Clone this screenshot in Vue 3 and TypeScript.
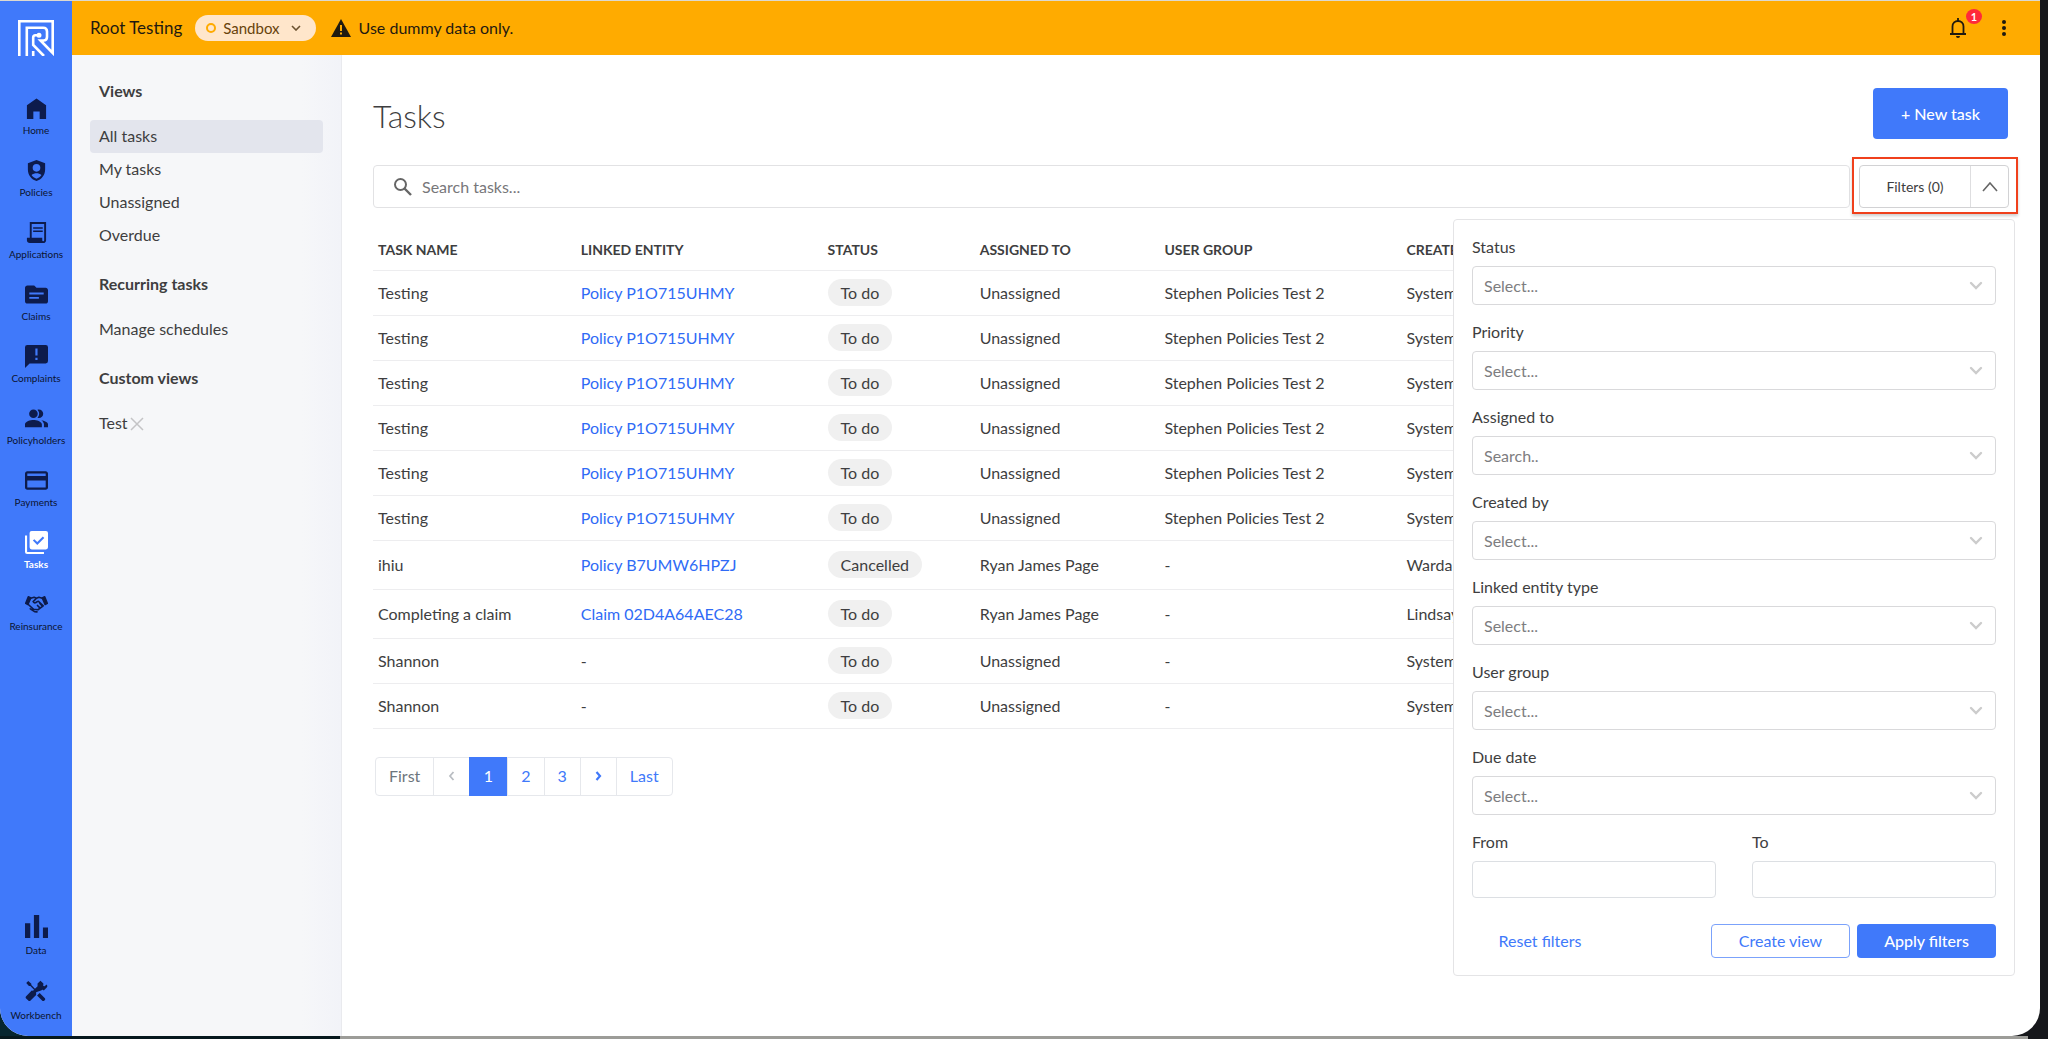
<script setup lang="ts">
import { ref } from 'vue'

interface NavItem {
  label: string
  icon: string
  active?: boolean
}

interface Task {
  name: string
  entity: string
  status: string
  assigned: string
  group: string
  creator: string
  tall?: boolean
}

const icons: Record<string, string> = {
  home: 'M12 1.5 2 8.600V23h6.700v-8h6.600v8H22V8.600z',
  policies: 'M12 1 3 4.500V11c0 5.600 3.800 10.700 9 12 5.200-1.300 9-6.400 9-12V4.500zM12 5.200a4 4 0 1 1 0 8 4 4 0 0 1 0-8zM12 20.500c-2.200-.7-4-2-5.200-3.700 1.300-1.400 3.500-1.900 5.200-1.900s3.900.5 5.200 1.900c-1.200 1.700-3 3-5.200 3.700z',
  applications: 'M5 1v16.500H2v2.700A3 3 0 0 0 5 23h14a3.200 3.200 0 0 0 3-3V1zM20 20a1 1 0 0 1-2 0v-2.500H7V3h13zM8.500 6.500h10V8h-10zM8.500 10h10v1.500h-10z',
  claims: 'M21.500 5H12L9.600 2.500H2.500C1.100 2.500 0 3.600 0 5v14c0 1.400 1.100 2.500 2.500 2.500h19c1.400 0 2.500-1.100 2.500-2.500V7.500C24 6.100 22.900 5 21.500 5zM14.500 16.500h-10v-2h10zM19.500 12h-15v-2h15z',
  complaints: 'M21.600 0H2.400A2.400 2.400 0 0 0 0 2.400V24l4.800-4.800h16.800a2.400 2.400 0 0 0 2.400-2.400V2.400A2.400 2.400 0 0 0 21.600 0zM13.100 15.600h-2.300v-2.300h2.300zM13.100 11h-2.300V3.600h2.300z',
  policyholders: 'M17 13.700c1.600 1.100 2.800 2.600 2.800 4.600V21H24v-3c0-2.400-3.800-3.800-7-4.300zM14.500 11.500a4.500 4.500 0 0 0 0-9c-.5 0-1 .1-1.500.3a6.500 6.500 0 0 1 0 8.400c.5.2 1 .3 1.500.3zM8.800 11.500a4.500 4.500 0 1 0 0-9 4.500 4.500 0 0 0 0 9zM8.800 13.500C5.800 13.500 0 15 0 18v3h17.600v-3c0-3-5.800-4.500-8.800-4.500z',
  payments: 'M21.600 2.400H2.400C1.100 2.400 0 3.500 0 4.800v14.400c0 1.300 1.100 2.400 2.400 2.400h19.200c1.300 0 2.400-1.100 2.400-2.400V4.800c0-1.300-1.100-2.400-2.400-2.400zM21.600 19.200H2.400V12h19.200zM21.600 7.200H2.400V4.800h19.200z',
  tasks: 'M21.800 0H7a2.200 2.200 0 0 0-2.200 2.200V17A2.200 2.200 0 0 0 7 19.200h14.800A2.200 2.200 0 0 0 24 17V2.200A2.200 2.200 0 0 0 21.800 0zM12.800 14.500 8.200 10l1.500-1.500 3.100 3.100 5.800-5.900 1.500 1.600zM0 4.800h2.200v17h17.600V24H2.200A2.200 2.200 0 0 1 0 21.800z',
  data: 'M0 8.500h5.500V24H0zM9.300 0h5.500v24H9.300zM18.700 13H24v11h-5.300z',
  tools: 'm20.500 18.800-5.200-5.200-2.700 2.700 5.200 5.200c.7.700 1.700.7 2.400 0l.7-.7c.3-.7.300-1.500-.4-2zM17.400 10.600c.7-.7 1.500-.4 2.200.3l3.100-3.100c1-1 .7-2.400-.2-3.200l-2 2-1.500-.4.2-2.500-3.100-3-3 3v2.700l-2.700 2.700-3.800-3.800V3.800L3.400 1 1.300 3.100l2.800 3.200h1.500l3.800 3.800-1 1-1.400-.1-5.800 5.900c-.7.700-.7 1.700 0 2.400l2.200 2.100c.7.700 1.700.7 2.400 0l5.800-5.800v-2.900z',
}

const mainNav: NavItem[] = [
  { label: 'Home', icon: 'home' },
  { label: 'Policies', icon: 'policies' },
  { label: 'Applications', icon: 'applications' },
  { label: 'Claims', icon: 'claims' },
  { label: 'Complaints', icon: 'complaints' },
  { label: 'Policyholders', icon: 'policyholders' },
  { label: 'Payments', icon: 'payments' },
  { label: 'Tasks', icon: 'tasks', active: true },
  { label: 'Reinsurance', icon: 'handshake' },
]

const bottomNav: NavItem[] = [
  { label: 'Data', icon: 'data' },
  { label: 'Workbench', icon: 'tools' },
]

const views = ['All tasks', 'My tasks', 'Unassigned', 'Overdue']
const currentView = ref('All tasks')

const policyTask: Task = {
  name: 'Testing',
  entity: 'Policy P1O715UHMY',
  status: 'To do',
  assigned: 'Unassigned',
  group: 'Stephen Policies Test 2',
  creator: 'System',
}
const shannonTask: Task = {
  name: 'Shannon',
  entity: '-',
  status: 'To do',
  assigned: 'Unassigned',
  group: '-',
  creator: 'System',
}

const tasks: Task[] = [
  ...Array.from({ length: 6 }, () => policyTask),
  { name: 'ihiu', entity: 'Policy B7UMW6HPZJ', status: 'Cancelled', assigned: 'Ryan James Page', group: '-', creator: 'Wardah', tall: true },
  { name: 'Completing a claim', entity: 'Claim 02D4A64AEC28', status: 'To do', assigned: 'Ryan James Page', group: '-', creator: 'Lindsay', tall: true },
  shannonTask,
  shannonTask,
]

const filters = [
  { id: 'status', label: 'Status', hint: 'Select...' },
  { id: 'priority', label: 'Priority', hint: 'Select...' },
  { id: 'assigned', label: 'Assigned to', hint: 'Search..' },
  { id: 'creator', label: 'Created by', hint: 'Select...' },
  { id: 'entity', label: 'Linked entity type', hint: 'Select...' },
  { id: 'group', label: 'User group', hint: 'Select...' },
  { id: 'due', label: 'Due date', hint: 'Select...' },
]

const filtersOpen = ref(true)
const search = ref('')
</script>

<template>
  <div class="desktop">
    <div class="window">
      <nav class="rail" aria-label="Main">
        <a class="logo" href="#" aria-label="Root">
          <svg width="36" height="36" viewBox="0 0 36 36" fill="none" stroke="#fff" stroke-width="2.6">
            <path d="M1.300 36V1.300h33.400V33L22.500 20.500h3c2.500 0 3.500-1.500 3.500-3.500v-5.500c0-2.500-1.500-3.700-3.700-3.700H8.800V36" />
            <path d="M26 36 15.200 25V17.500q0-2.200 2.200-2.200h3" />
            <path d="M15.200 36V31" />
            <circle cx="21" cy="15.300" r="1.700" fill="#fff" stroke-width="1.600" />
          </svg>
        </a>
        <a v-for="item in mainNav" :key="item.label" href="#" class="rail-item" :class="{ active: item.active }">
          <svg v-if="item.icon === 'handshake'" width="23" height="23" viewBox="0 0 24 24" fill="none" stroke="currentColor" stroke-width="1.700" stroke-linejoin="round" stroke-linecap="round">
            <path d="M3.500 4 6 5.200 3 12 .8 10.800zM20.500 4 18 5.200l3 6.800 2.200-1.200z" fill="currentColor" />
            <path d="M6 5.500 9.500 4.500 12 5.500l2.500-1 3.500 1M12 5.500 8.500 9c.5 1.700 2.800 1.600 4 .2l1.500-.6 5 4.900-5.500 4L9 17l-5.500-5M13 13l2 2M15.500 11l2 2M5.500 16.500l4.500 3 2.500.2" />
          </svg>
          <svg v-else width="23" height="23" viewBox="0 0 24 24" fill="currentColor" fill-rule="evenodd">
            <path :d="icons[item.icon]" />
          </svg>
          <span>{{ item.label }}</span>
        </a>
        <div class="rail-bottom">
          <a v-for="item in bottomNav" :key="item.label" href="#" class="rail-item">
            <svg width="23" height="23" viewBox="0 0 24 24" fill="currentColor" fill-rule="evenodd">
              <path :d="icons[item.icon]" />
            </svg>
            <span>{{ item.label }}</span>
          </a>
        </div>
      </nav>

      <div class="shell">
        <header class="topbar">
          <span class="org">Root Testing</span>
          <button class="env" type="button">
            <i class="ring"></i>
            Sandbox
            <svg width="10" height="6" viewBox="0 0 10 6" fill="none" stroke="#6b5230" stroke-width="1.600"><path d="m1 1 4 4 4-4" /></svg>
          </button>
          <svg class="warn" width="20" height="18" viewBox="0 0 20 18"><path d="M10 0 0 18h20z" fill="#1f1a10" /><path d="M9 6h2v6H9zM9 13.500h2v2H9z" fill="#ffab00" /></svg>
          <span>Use dummy data only.</span>
          <div class="topbar-end">
            <button class="bell" type="button" aria-label="Notifications">
              <svg width="18" height="20" viewBox="0 0 18 20" fill="none" stroke="#1f1a10" stroke-width="1.800"><path d="M1 16h16M3.500 16V8.500C3.500 5 6 3 9 3s5.500 2 5.500 5.500V16M9 0v3" /><path d="M7 18h4a2 2 0 0 1-4 0z" fill="#1f1a10" stroke="none" /></svg>
              <span class="badge">1</span>
            </button>
            <button class="more" type="button" aria-label="More">
              <svg width="4" height="16" viewBox="0 0 4 16" fill="#1f1a10"><circle cx="2" cy="2" r="2" /><circle cx="2" cy="8" r="2" /><circle cx="2" cy="14" r="2" /></svg>
            </button>
          </div>
        </header>

        <div class="body">
          <aside class="views">
            <h2>Views</h2>
            <a v-for="view in views" :key="view" href="#" :class="{ current: view === currentView }" @click.prevent="currentView = view">{{ view }}</a>
            <h2>Recurring tasks</h2>
            <a href="#">Manage schedules</a>
            <h2>Custom views</h2>
            <div class="custom-view">
              <a href="#">Test</a>
              <button type="button" aria-label="Remove view">
                <svg width="14" height="14" viewBox="0 0 14 14" stroke="#c4c4c6" stroke-width="1.500"><path d="m1 1 12 12M13 1 1 13" /></svg>
              </button>
            </div>
          </aside>

          <main class="content">
            <div class="heading">
              <h1>Tasks</h1>
              <button class="primary new-task" type="button">+ New task</button>
            </div>

            <div class="tools">
              <label class="search">
                <svg width="18" height="18" viewBox="0 0 18 18" fill="none" stroke="#666" stroke-width="2"><circle cx="6.500" cy="6.500" r="5.500" /><path d="m10.500 10.500 6.500 6.500" stroke-width="2.400" /></svg>
                <input v-model="search" type="text" placeholder="Search tasks..." aria-label="Search tasks" />
              </label>
              <div class="filter-zone">
                <div class="filter-toggle">
                  <button class="count" type="button">Filters (0)</button>
                  <button class="caret" type="button" aria-label="Toggle filters" @click="filtersOpen = !filtersOpen">
                    <svg width="16" height="10" viewBox="0 0 16 10" fill="none" stroke="#666" stroke-width="1.600"><path d="m1 9 7-8 7 8" /></svg>
                  </button>
                </div>
                <form v-if="filtersOpen" class="panel" @submit.prevent>
                  <div v-for="f in filters" :key="f.id" class="field">
                    <label :for="f.id">{{ f.label }}</label>
                    <div class="select">
                      <select :id="f.id"><option>{{ f.hint }}</option></select>
                      <svg width="14" height="9" viewBox="0 0 14 9" fill="none" stroke="#ccc" stroke-width="2.400" stroke-linecap="round"><path d="m2 2 5 5 5-5" /></svg>
                    </div>
                  </div>
                  <div class="dates">
                    <div class="field">
                      <label for="from">From</label>
                      <input id="from" type="text" />
                    </div>
                    <div class="field">
                      <label for="to">To</label>
                      <input id="to" type="text" />
                    </div>
                  </div>
                  <div class="actions">
                    <button class="reset" type="button">Reset filters</button>
                    <button class="outline" type="button">Create view</button>
                    <button class="primary" type="submit">Apply filters</button>
                  </div>
                </form>
              </div>
            </div>

            <table>
              <colgroup>
                <col class="c-name" /><col class="c-entity" /><col class="c-status" /><col class="c-assigned" /><col class="c-group" /><col />
              </colgroup>
              <thead>
                <tr>
                  <th>TASK NAME</th><th>LINKED ENTITY</th><th>STATUS</th><th>ASSIGNED TO</th><th>USER GROUP</th><th>CREATED</th>
                </tr>
              </thead>
              <tbody>
                <tr v-for="(task, i) in tasks" :key="i" :class="{ tall: task.tall }">
                  <td>{{ task.name }}</td>
                  <td><a v-if="task.entity !== '-'" href="#">{{ task.entity }}</a><template v-else>-</template></td>
                  <td><span class="pill">{{ task.status }}</span></td>
                  <td>{{ task.assigned }}</td>
                  <td>{{ task.group }}</td>
                  <td>{{ task.creator }}</td>
                </tr>
              </tbody>
            </table>

            <nav class="pages" aria-label="Pages">
              <button type="button" disabled>First</button>
              <button type="button" disabled aria-label="Previous">
                <svg width="7" height="10" viewBox="0 0 7 10" fill="none" stroke="#b9bdc2" stroke-width="1.800"><path d="M5.500 1 2 5l3.500 4" /></svg>
              </button>
              <button type="button" class="on">1</button>
              <button type="button">2</button>
              <button type="button">3</button>
              <button type="button" aria-label="Next">
                <svg width="7" height="10" viewBox="0 0 7 10" fill="none" stroke="#4079fa" stroke-width="2.200"><path d="M1.500 1 5 5 1.500 9" /></svg>
              </button>
              <button type="button">Last</button>
            </nav>
          </main>
        </div>
      </div>
    </div>
  </div>
</template>

<style>
body {
  margin: 0;
}
</style>

<style scoped>
* {
  box-sizing: border-box;
}
.desktop {
  min-height: 100vh;
  display: flex;
  padding: 1px 8px 3px 0;
  background:
    linear-gradient(#dcd9d0, #dcd9d0) 0 0 / calc(100% - 8px) 1px no-repeat,
    linear-gradient(90deg, #06181d 340px, #9c9c98 340px) 0 100% / calc(100% - 20px) 3px no-repeat,
    linear-gradient(#06262f, #06262f) 0 100% / 60px 60px no-repeat,
    #16171b;
  font-family: Lato, "Liberation Sans", sans-serif;
  font-size: 16px;
  line-height: 20px;
  color: #3e3e40;
}
.window {
  flex: 1;
  min-width: 0;
  display: flex;
  overflow: hidden;
  border-radius: 0 0 28px 28px;
  background: #fff;
}
button,
input,
select {
  font: inherit;
  color: inherit;
  margin: 0;
}
button {
  padding: 0;
  border: 0;
  background: none;
  cursor: pointer;
}
a {
  color: inherit;
  text-decoration: none;
}
svg {
  display: block;
  flex: none;
}

.rail {
  width: 72px;
  flex: none;
  display: flex;
  flex-direction: column;
  padding-bottom: 11px;
  background: #4079fa;
}
.logo {
  align-self: center;
  margin: 19px 0 41px;
}
.rail-item {
  height: 62px;
  display: flex;
  flex-direction: column;
  align-items: center;
  gap: 2px;
  font-size: 10px;
  line-height: 16px;
  color: #0d1b4c;
}
.rail-item span {
  color: #0b1431;
}
.rail-item.active,
.rail-item.active span {
  color: #fff;
}
.rail-item.active span {
  font-weight: 700;
}
.rail-bottom {
  margin-top: auto;
  display: flex;
  flex-direction: column;
  gap: 3px;
}
.rail-bottom .rail-item {
  gap: 4px;
}
.rail-bottom .rail-item:last-child {
  height: 45px;
}

.shell {
  flex: 1;
  min-width: 0;
  display: flex;
  flex-direction: column;
}
.topbar {
  height: 54px;
  display: flex;
  align-items: center;
  padding: 0 34px 0 18px;
  background: #ffab00;
  color: #1f1a10;
}
.org {
  font-size: 17px;
}
.env {
  height: 26px;
  display: flex;
  align-items: center;
  gap: 7px;
  margin: 0 15px 0 13px;
  padding: 0 15px 0 11px;
  border-radius: 13px;
  background: #ffe6cb;
  color: #68430c;
  font-size: 15px;
}
.env svg {
  margin-left: 4px;
}
.ring {
  width: 10px;
  height: 10px;
  border: 2px solid #ffab00;
  border-radius: 50%;
}
.warn {
  margin-right: 8px;
}
.topbar-end {
  margin-left: auto;
  display: flex;
  align-items: center;
  gap: 35px;
}
.bell {
  position: relative;
}
.badge {
  position: absolute;
  left: 17px;
  top: -9px;
  width: 16px;
  height: 15px;
  border-radius: 50%;
  background: #ff2a3a;
  color: #fff;
  font-size: 11px;
  line-height: 15px;
  font-weight: 700;
  text-align: center;
}

.body {
  flex: 1;
  display: flex;
}
.views {
  width: 270px;
  flex: none;
  display: flex;
  flex-direction: column;
  padding: 13px 18px;
  border-right: 1px solid #e9eaee;
  background: linear-gradient(90deg, #f6f7f9 230px, #f2f3f8);
}
.views h2 {
  margin: 0;
  padding: 13px 9px;
  font-size: 16px;
  line-height: 20px;
  font-weight: 700;
}
.views a {
  padding: 6px 9px 7px;
  border-radius: 4px;
}
.views a + h2 {
  margin-top: 9px;
}
.views h2 + a,
.custom-view {
  margin-top: 6px;
}
.views .current {
  background: #e3e5ed;
}
.custom-view {
  display: flex;
  align-items: center;
}
.custom-view a {
  padding-right: 2px;
}

.content {
  flex: 1;
  min-width: 0;
  padding: 33px 32px 24px 31px;
}
.heading {
  display: flex;
  justify-content: space-between;
  align-items: flex-end;
}
h1 {
  margin: 0;
  font-size: 32px;
  line-height: 46px;
  font-weight: 300;
}
.primary {
  border-radius: 4px;
  background: #4079fa;
  color: #fff;
  font-weight: 500;
}
.new-task {
  width: 135px;
  height: 51px;
}
.tools {
  display: flex;
  gap: 2px;
  margin: 18px -10px 0 0;
}
.search {
  flex: 1;
  height: 43px;
  margin-top: 8px;
  display: flex;
  align-items: center;
  gap: 10px;
  padding: 0 20px;
  border: 1px solid #e2e2e4;
  border-radius: 4px;
}
.search input {
  flex: 1;
  border: 0;
  padding: 0;
  outline: 0;
}
.search input::placeholder {
  color: #77777a;
  opacity: 1;
}
.filter-zone {
  position: relative;
  width: 166px;
  height: 57px;
  padding: 6px 7px 6px 5px;
  border: 2px solid #f0401c;
  box-shadow: 0 2px 3px rgba(0, 0, 0, 0.2);
}
.filter-toggle {
  height: 43px;
  display: flex;
  border: 1px solid #d2d2d4;
  border-radius: 4px;
}
.count {
  flex: 1;
  font-size: 14px;
}
.caret {
  width: 38px;
  display: flex;
  align-items: center;
  justify-content: center;
  border-left: 1px solid #dedee0;
}

.panel {
  position: absolute;
  z-index: 2;
  top: 60px;
  right: 1px;
  width: 562px;
  padding: 17px 18px;
  border: 1px solid #e4e4e6;
  border-radius: 4px;
  background: #fff;
}
.field {
  display: flex;
  flex-direction: column;
  gap: 9px;
  margin-bottom: 17px;
}
.field label {
  line-height: 20px;
}
.select {
  display: grid;
  align-items: center;
}
.select > * {
  grid-area: 1 / 1;
}
.select svg {
  justify-self: end;
  margin-right: 13px;
  pointer-events: none;
}
.select select {
  width: 100%;
  height: 39px;
  padding: 0 11px;
  appearance: none;
  border: 1px solid #d9d9db;
  border-radius: 4px;
  background: #fff;
  color: #7d7d80;
}
.dates {
  display: flex;
  gap: 36px;
}
.dates .field {
  flex: 1;
  min-width: 0;
  margin-bottom: 26px;
}
.dates input {
  width: 100%;
  height: 37px;
  border: 1px solid #dcdfe3;
  border-radius: 4px;
}
.actions {
  display: flex;
  gap: 7px;
}
.actions button {
  width: 139px;
  height: 34px;
}
.actions .reset {
  width: 136px;
  margin-right: auto;
  color: #4079fa;
}
.actions .outline {
  border: 1px solid #7ba2fb;
  border-radius: 4px;
  color: #4079fa;
}

table {
  width: 100%;
  margin-top: 17px;
  border-collapse: collapse;
  table-layout: fixed;
}
.c-name {
  width: 12.4%;
}
.c-entity {
  width: 15.1%;
}
.c-status {
  width: 9.3%;
}
.c-assigned {
  width: 11.3%;
}
.c-group {
  width: 14.8%;
}
th,
td {
  height: 45px;
  padding: 0 5px;
  text-align: left;
  white-space: nowrap;
  border-bottom: 1px solid #ededef;
}
th {
  height: 39px;
  font-size: 14px;
  font-weight: 700;
}
.tall td {
  height: 49px;
}
td a {
  color: #2f6bf6;
}
.pill {
  display: inline-block;
  height: 27px;
  line-height: 27px;
  padding: 0 13px;
  border-radius: 14px;
  background: #f0f0f0;
}
.pages {
  display: flex;
  width: max-content;
  margin: 28px 0 0 2px;
  border: 1px solid #e6e8ec;
  border-radius: 4px;
}
.pages button {
  min-width: 36px;
  height: 37px;
  padding: 0 13px;
  display: flex;
  align-items: center;
  justify-content: center;
  color: #4079fa;
}
.pages button + button {
  border-left: 1px solid #e6e8ec;
}
.pages button:disabled {
  color: #6c757d;
}
.pages .on {
  min-width: 38px;
  margin: -1px 0;
  height: 39px;
  border: 0;
  background: #4079fa;
  color: #fff;
}
</style>
